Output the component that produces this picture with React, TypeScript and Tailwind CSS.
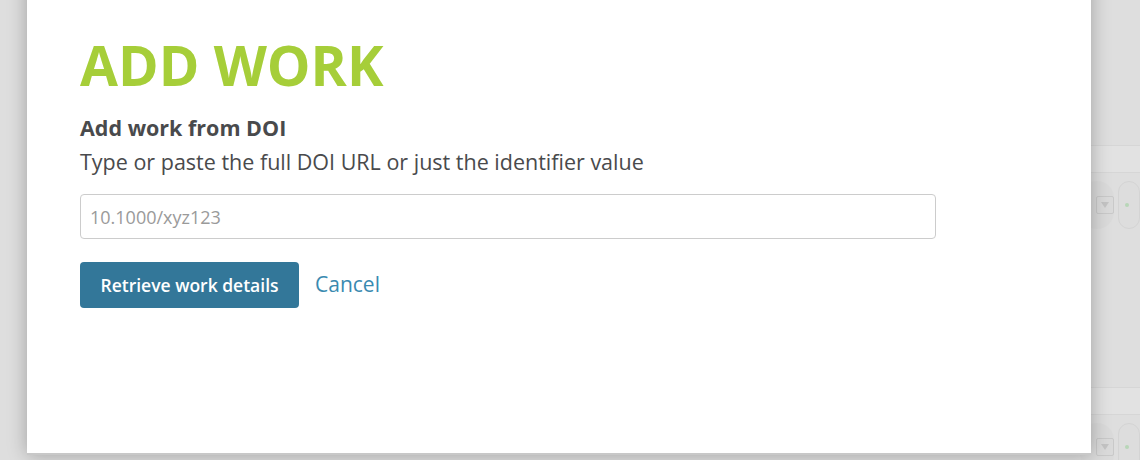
export default function App() {
    return (
        <div
            className="relative h-[460px] w-[1140px] overflow-hidden bg-[#dedede]"
            style={{ fontFamily: '"Open Sans", "Noto Sans", sans-serif' }}
        >
            {/* page behind the dialog */}
            <div className="flex flex-col pt-[145px] pl-[1080px]">
                <BackdropRow />
                <div className="h-[150px]" />
                <BackdropRow />
            </div>

            {/* dialog */}
            <div className="absolute left-[27px] top-[-20px] h-[475px] w-[1064px] border-b-[2px] border-[#c8c8c8] bg-white px-[53px] pt-[54px] shadow-[0_0_18px_rgba(0,0,0,0.28)]">
                <h1 className="text-[55px] font-bold leading-[62px] text-[#a6ce39]">ADD WORK</h1>
                <div className="mt-[18px] w-[856px] text-[#494a4c]">
                    <h2 className="text-[21.5px] font-bold leading-[28px]">Add work from DOI</h2>
                    <p className="mt-[6px] text-[21.5px] leading-[28px]">
                        Type or paste the full DOI URL or just the identifier value
                    </p>
                    <input
                        type="text"
                        placeholder="10.1000/xyz123"
                        className="mt-[18px] h-[45px] w-full rounded-[4px] border border-[#cccccc] px-[9px] text-[18px] text-[#494a4c] outline-none placeholder:text-[#9a9a9a]"
                    />
                    <div className="mt-[23px] flex items-center gap-[16px]">
                        <button className="h-[46px] w-[219px] rounded-[4px] bg-[#337799] text-[17.5px] font-semibold text-white">
                            Retrieve work details
                        </button>
                        <a href="#" className="text-[21px] text-[#3a8ab0]">
                            Cancel
                        </a>
                    </div>
                </div>
            </div>
        </div>
    );
}

function BackdropRow() {
    return (
        <div className="flex flex-col">
            <div className="h-[28px] border-y border-[#d6d6d6] bg-[#e2e2e2]" />
            <div className="flex items-center gap-[4px] py-[8px]">
                <div className="flex h-[48px] w-[48px] items-center justify-center rounded-full bg-[#dadada]">
                    <div className="ml-[16px] flex h-[18px] w-[18px] items-center justify-center rounded-[2px] border border-[#c9c9c9]">
                        <svg width="8" height="6" viewBox="0 0 8 6">
                            <path d="M0 0h8L4 6z" fill="#c4c4c4" />
                        </svg>
                    </div>
                </div>
                <div className="flex h-[48px] w-[48px] items-center justify-start rounded-full border border-[#d4d4d4] bg-[#dddddd] pl-[6px]">
                    <div className="h-[4px] w-[4px] rounded-full bg-[#b8d6b8]" />
                </div>
            </div>
        </div>
    );
}
